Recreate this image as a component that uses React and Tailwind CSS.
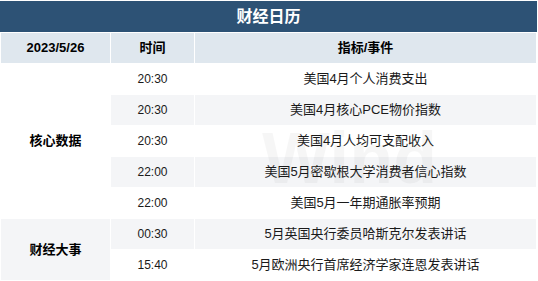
import React from "react";

const rows = [
  ["20:30", "美国4月个人消费支出"],
  ["20:30", "美国4月核心PCE物价指数"],
  ["20:30", "美国4月人均可支配收入"],
  ["22:00", "美国5月密歇根大学消费者信心指数"],
  ["22:00", "美国5月一年期通胀率预期"],
  ["00:30", "5月英国央行委员哈斯克尔发表讲话"],
  ["15:40", "5月欧洲央行首席经济学家连恩发表讲话"],
];

export default function App() {
  return (
    <div
      className="relative w-[538px] h-[281px] bg-white overflow-hidden"
      style={{ fontFamily: '"Liberation Sans", "Noto Sans CJK SC", sans-serif' }}
    >
      <div className="mt-px w-[537px] h-[31px] bg-[#2d5275] flex items-center justify-center text-white font-bold text-[16px]">
        财经日历
      </div>
      <div className="mt-px ml-px w-[535px] grid grid-cols-[109px_83px_1fr] grid-rows-[30px_repeat(7,30px)] gap-px text-[#1a1a1a]">
        <div className="bg-[#dfe7ee] flex items-center justify-center font-bold text-[13px] text-black">2023/5/26</div>
        <div className="bg-[#dfe7ee] flex items-center justify-center font-bold text-[13px] text-black">时间</div>
        <div className="bg-[#dfe7ee] flex items-center justify-center font-bold text-[13px] text-black">指标/事件</div>

        <div className="row-span-5 col-start-1 row-start-2 bg-white flex items-center justify-center font-bold text-[13px] text-black">核心数据</div>
        <div className="row-span-2 col-start-1 row-start-7 bg-[#f4f5f7] flex items-center justify-center font-bold text-[13px] text-black">财经大事</div>

        {rows.map(([t, e], i) => {
          const bg = i % 2 === 1 || i === 5 ? "bg-[#f4f5f7]" : "bg-white";
          const bgc = i === 6 ? "bg-white" : bg;
          return (
            <React.Fragment key={i}>
              <div className={`${bgc} col-start-2 flex items-center justify-center text-[12px]`}>{t}</div>
              <div className={`${bgc} col-start-3 flex items-center justify-center text-[13px]`}>{e}</div>
            </React.Fragment>
          );
        })}
      </div>
      <div
        aria-hidden="true"
        className="absolute left-[262px] top-[122px] text-[72px] font-bold leading-none text-black/[0.035] pointer-events-none select-none"
        style={{ fontFamily: '"Liberation Sans", sans-serif' }}
      >
        Wind
      </div>
    </div>
  );
}
